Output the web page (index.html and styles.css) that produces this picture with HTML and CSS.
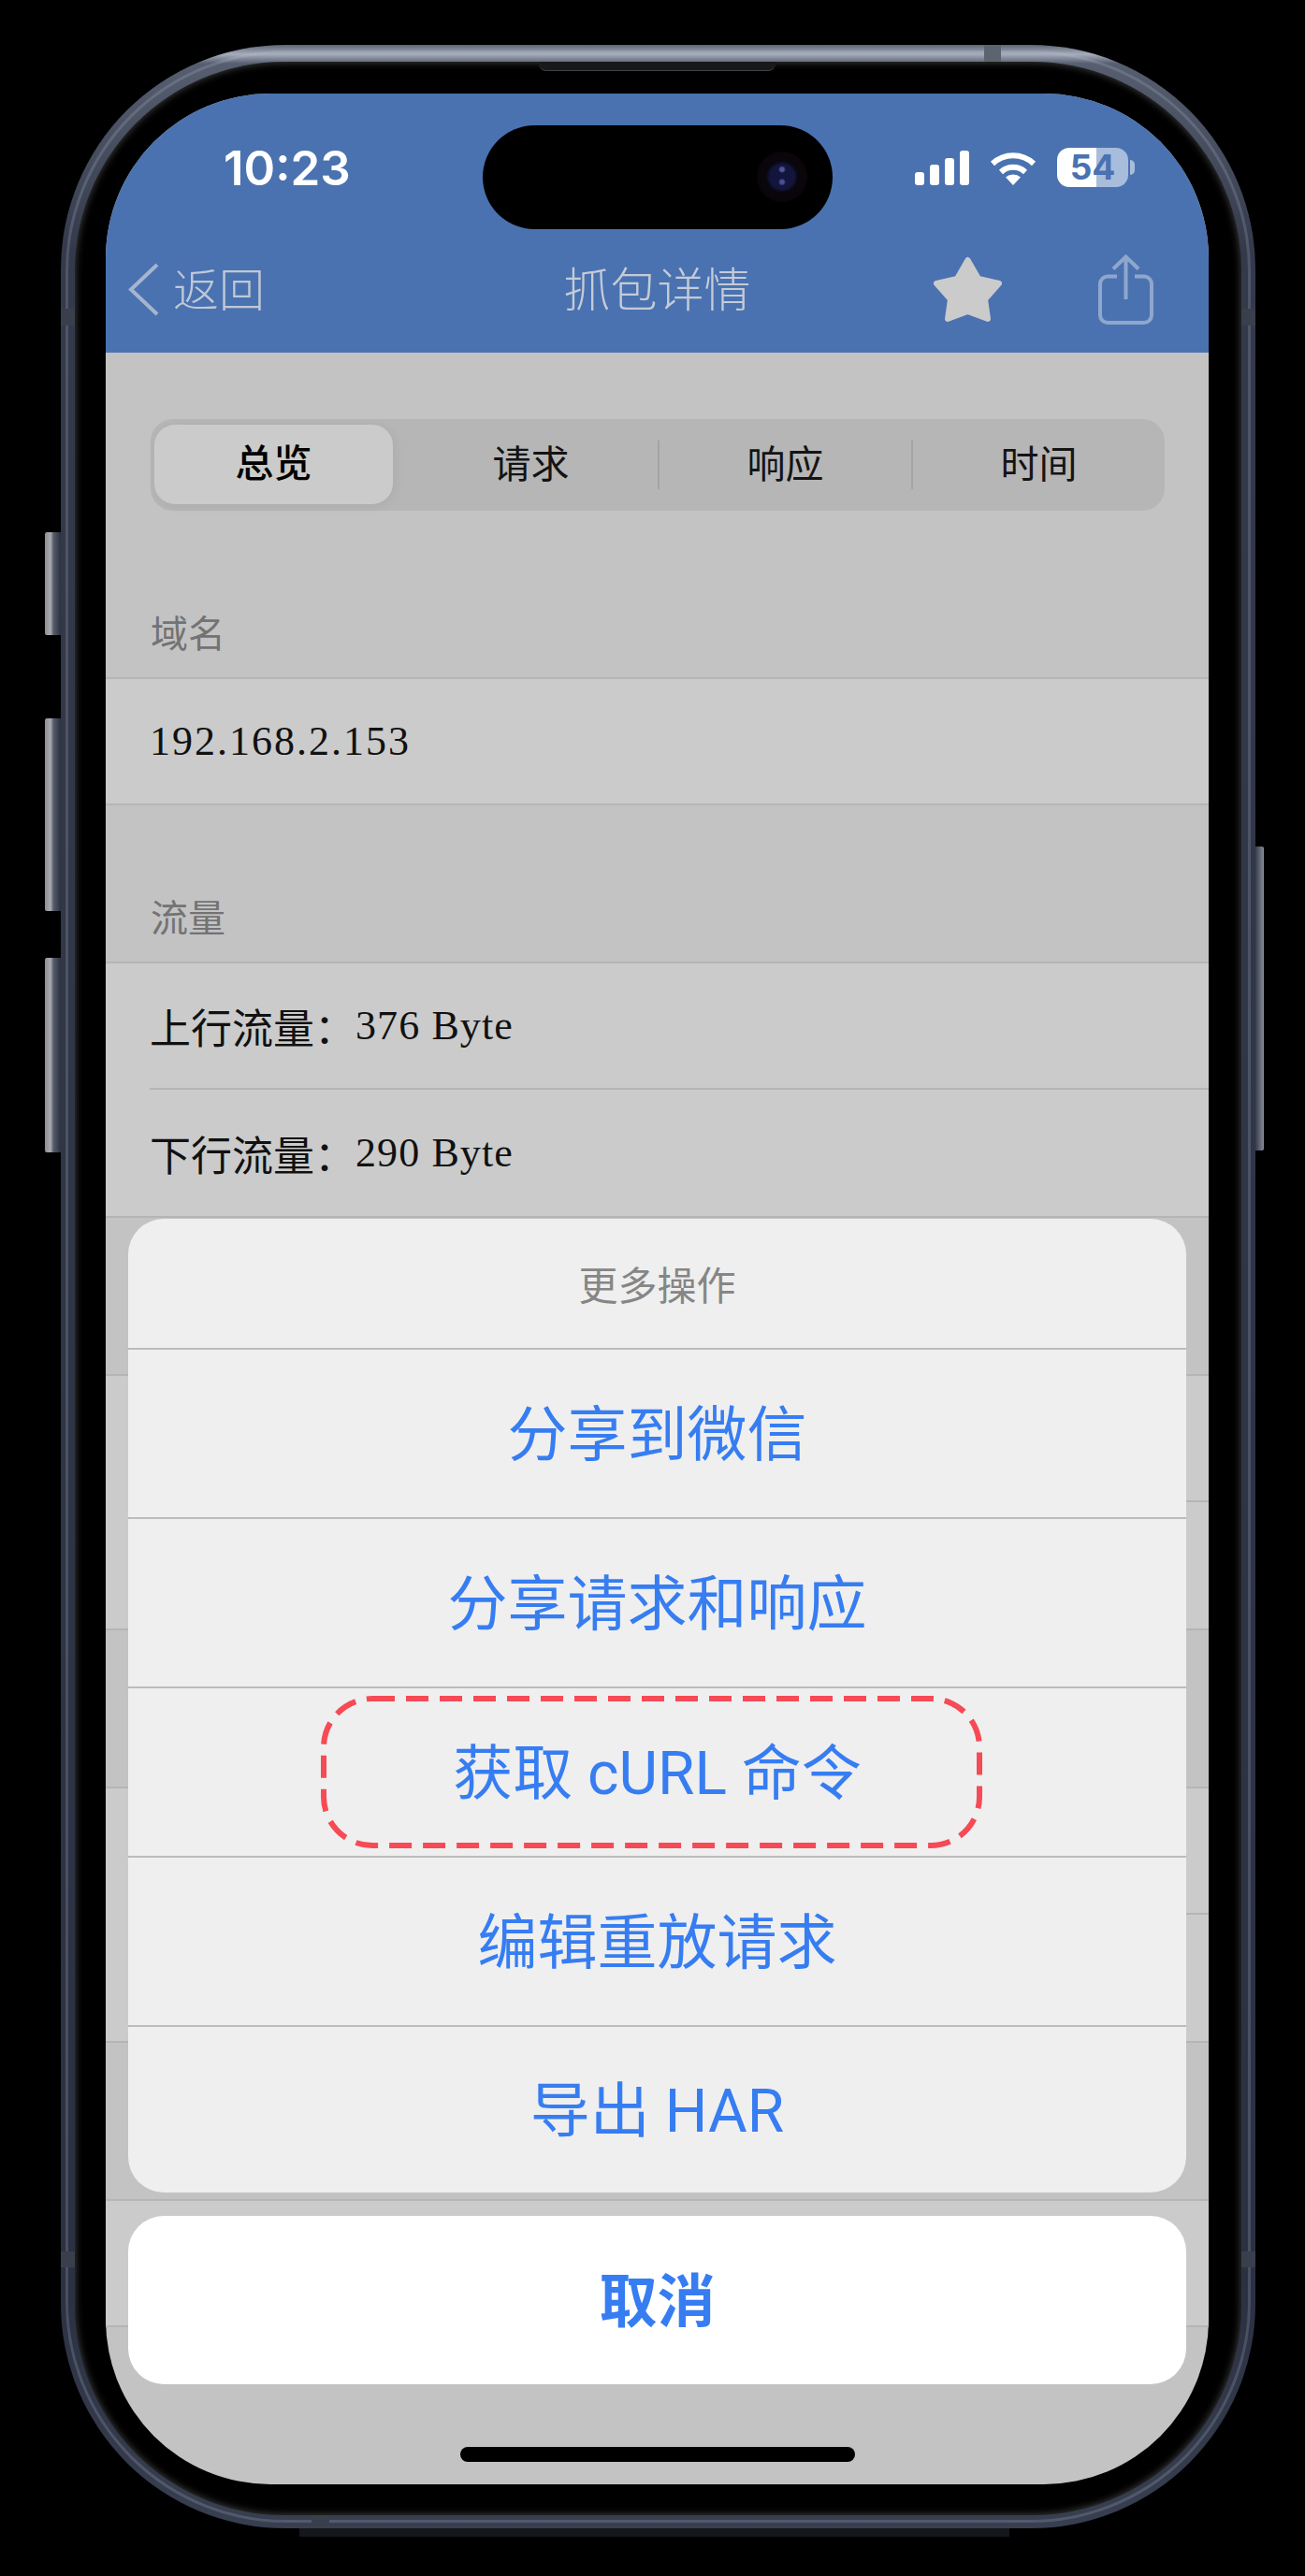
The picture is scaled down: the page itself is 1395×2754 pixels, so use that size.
FILE: index.html
```html
<!DOCTYPE html>
<html lang="zh-CN">
<head>
    <meta charset="UTF-8">
    <meta name="viewport" content="width=device-width, initial-scale=1.0">
    <title>抓包详情</title>
    <link rel="stylesheet" href="styles.css">
</head>
<body>
    <div class="phone">
        <span class="side-btn left mute"></span>
        <span class="side-btn left vol-up"></span>
        <span class="side-btn left vol-down"></span>
        <span class="side-btn right power"></span>
        <span class="antenna top-band"></span>
        <span class="antenna left-band-a"></span>
        <span class="antenna right-band-a"></span>
        <span class="antenna left-band-b"></span>
        <span class="antenna right-band-b"></span>
        <span class="antenna bottom-band"></span>
        <span class="under-shadow"></span>

        <div class="bezel">
            <span class="speaker"></span>
            <div class="screen">
                <div class="island"><span class="camera"></span></div>

                <header class="app-header">
                    <div class="status-bar">
                        <span class="time">10:23</span>
                        <div class="status-icons">
                            <svg class="signal" width="58" height="37" viewBox="0 0 58 37">
                                <rect x="0" y="23" width="10" height="14" rx="3"/>
                                <rect x="16" y="15" width="10" height="22" rx="3"/>
                                <rect x="32" y="8" width="10" height="29" rx="3"/>
                                <rect x="48" y="0" width="10" height="37" rx="3"/>
                            </svg>
                            <svg class="wifi" width="50" height="37" viewBox="0 0 50 37">
                                <path class="wifi-arc" d="M3 14A32 32 0 0 1 47 14"/>
                                <path class="wifi-arc" d="M12 23A19 19 0 0 1 38 23"/>
                                <path class="wifi-dot" d="M25 37L17 28.5A12 12 0 0 1 33 28.5Z"/>
                            </svg>
                            <div class="battery">54</div>
                        </div>
                    </div>
                    <nav class="nav-bar">
                        <div class="nav-back">
                            <svg width="33" height="57" viewBox="0 0 33 57">
                                <path d="M31 2L3 28.5L31 55"/>
                            </svg>
                            <span>返回</span>
                        </div>
                        <div class="nav-title">抓包详情</div>
                        <div class="nav-actions">
                            <svg class="star" width="75" height="71" viewBox="0 0 75 71">
                                <path d="M37.5 4L49 24L71 29L56 46L59 67L37.5 59L16 67L19 46L4 29L26 24Z"/>
                            </svg>
                            <svg class="share" width="59" height="75" viewBox="0 0 59 75">
                                <path d="M20 23.5H10a8 8 0 0 0-8 8V65a8 8 0 0 0 8 8h39a8 8 0 0 0 8-8V31.5a8 8 0 0 0-8-8H39"/>
                                <path d="M29.5 3V48M16 15.5L29.5 2.5L43 15.5"/>
                            </svg>
                        </div>
                    </nav>
                </header>

                <div class="segments">
                    <div class="seg-item active">总览</div>
                    <div class="seg-item">请求</div>
                    <div class="seg-item divided">响应</div>
                    <div class="seg-item divided">时间</div>
                </div>

                <div class="section-head">域名</div>
                <div class="rows">
                    <div class="row"><span class="value ip">192.168.2.153</span></div>
                </div>

                <div class="section-head">流量</div>
                <div class="rows">
                    <div class="row">上行流量：<span class="value">376 Byte</span></div>
                    <div class="row">下行流量：<span class="value">290 Byte</span></div>
                </div>

                <div class="section-head"></div>
                <div class="rows">
                    <div class="row"></div>
                    <div class="row"></div>
                </div>

                <div class="section-head"></div>
                <div class="rows">
                    <div class="row"></div>
                    <div class="row"></div>
                </div>

                <div class="section-head"></div>
                <div class="rows">
                    <div class="row"></div>
                </div>

                <div class="sheet">
                    <div class="sheet-group">
                        <div class="sheet-title">更多操作</div>
                        <div class="sheet-item">分享到微信</div>
                        <div class="sheet-item">分享请求和响应</div>
                        <div class="sheet-item">
                            获取 cURL 命令
                            <svg class="dash-mark" width="707" height="163" viewBox="0 0 707 163">
                                <rect x="3" y="3" width="701" height="157" rx="52"/>
                            </svg>
                        </div>
                        <div class="sheet-item">编辑重放请求</div>
                        <div class="sheet-item last">导出 HAR</div>
                    </div>
                    <div class="sheet-cancel">取消</div>
                </div>

                <span class="home-bar"></span>
            </div>
        </div>
    </div>
</body>
</html>
```

FILE: styles.css
```css
html, body {
    margin: 0;
    height: 2754px;
    overflow: hidden;
    background: #000;
}

body {
    padding: 48px 0 0 65px;
    box-sizing: border-box;
    font-family: Roboto, "Noto Sans CJK SC", sans-serif;
}

.phone {
    position: relative;
    width: 1277px;
    height: 2655px;
    box-sizing: border-box;
    padding: 18px 15px 14px;
    border-radius: 240px;
    background: linear-gradient(180deg, #5d6475 0, #a6adbb 10px, #565e70 20px, #343a4b 220px, #2b3142 2400px, #383f50 100%);
}

.phone::before {
    content: '';
    position: absolute;
    inset: 6px 5px;
    border: 3px solid rgba(190, 198, 220, 0.2);
    border-radius: 236px;
}

.side-btn {
    position: absolute;
    background: linear-gradient(90deg, #8c8e94, #a9abb0 35%, #555a68 55%, #2c3140);
}

.side-btn.left {
    left: -17px;
    width: 17px;
    border-radius: 2px 0 0 2px;
}

.side-btn.right {
    right: -9px;
    width: 9px;
    background: linear-gradient(90deg, #353b4a, #878c97);
    border-radius: 0 2px 2px 0;
}

.mute { top: 521px; height: 110px; }
.vol-up { top: 720px; height: 206px; }
.vol-down { top: 976px; height: 208px; }
.power { top: 857px; height: 325px; }

.antenna {
    position: absolute;
    background: #3a3f4c;
}

.top-band { top: 0; left: 987px; width: 18px; height: 18px; background: #5e6370; }
.left-band-a { top: 282px; left: 0; width: 15px; height: 18px; }
.right-band-a { top: 282px; right: 0; width: 15px; height: 18px; }
.left-band-b { top: 2359px; left: 0; width: 15px; height: 17px; }
.right-band-b { top: 2359px; right: 0; width: 15px; height: 17px; }
.bottom-band { bottom: 0; left: 268px; width: 19px; height: 14px; }

.under-shadow {
    position: absolute;
    left: 255px;
    top: 100%;
    width: 759px;
    height: 9px;
    background: #15171c;
}

.bezel {
    position: relative;
    height: 100%;
    box-sizing: border-box;
    padding: 34px 35px 33px 33px;
    border-radius: 224px;
    background: #000;
    box-shadow: inset 0 0 9px rgba(130, 134, 130, 0.55);
}

.speaker {
    position: absolute;
    top: 0;
    left: 496px;
    width: 253px;
    height: 9px;
    background: #17191b;
    border-bottom: 1px solid #3f4344;
    border-radius: 0 0 8px 8px;
}

.screen {
    position: relative;
    height: 100%;
    overflow: hidden;
    border-radius: 176px;
    background: #c3c3c3;
}

.island {
    position: absolute;
    top: 34px;
    left: 403px;
    width: 374px;
    height: 111px;
    border-radius: 56px;
    background: #000;
}

.camera {
    position: absolute;
    top: 27px;
    right: 26px;
    width: 56px;
    height: 56px;
    border-radius: 50%;
    background:
        radial-gradient(circle at 50% 36%, #53539a 0, #53539a 2px, transparent 4px),
        radial-gradient(circle at 50% 60%, #4a4f9a 0, #4a4f9a 2px, transparent 4px),
        radial-gradient(circle, #14153c 0, #14153c 13px, #08060e 17px, #0b0508 26px, #000 28px);
}

.app-header {
    height: 277px;
    background: #4a72b0;
}

.status-bar {
    height: 158px;
    padding: 0 79px 0 126px;
    display: flex;
    align-items: center;
    justify-content: space-between;
}

.time {
    font-family: Inter, sans-serif;
    font-size: 51px;
    font-weight: 600;
    color: #fff;
}

.status-icons {
    display: flex;
    align-items: center;
    gap: 22px;
}

.signal rect {
    fill: #fff;
}

.wifi-arc {
    fill: none;
    stroke: #fff;
    stroke-width: 6;
}

.wifi-dot {
    fill: #fff;
}

.battery {
    position: relative;
    width: 76px;
    height: 42px;
    margin-right: 7px;
    border-radius: 13px;
    background: linear-gradient(90deg, #fff 55%, #a8bcdc 55%);
    color: #4a72b0;
    font-family: Inter, sans-serif;
    font-size: 37px;
    font-weight: 700;
    line-height: 42px;
    text-align: center;
}

.battery::after {
    content: '';
    position: absolute;
    top: 13px;
    right: -7px;
    width: 5px;
    height: 16px;
    border-radius: 0 5px 5px 0;
    background: #a8bcdc;
}

.nav-bar {
    height: 119px;
    box-sizing: border-box;
    padding: 0 24px 16px;
    display: grid;
    grid-template-columns: 1fr auto 1fr;
    align-items: center;
}

.nav-back {
    display: flex;
    align-items: center;
    gap: 15px;
    color: #c0c8d6;
    font-size: 49px;
    font-weight: 300;
}

.nav-back span, .nav-title {
    margin-bottom: 7px;
}

.nav-back path {
    fill: none;
    stroke: #a5b5d0;
    stroke-width: 4;
}

.nav-title {
    color: #c5cbd6;
    font-size: 50px;
    font-weight: 300;
}

.nav-actions {
    display: flex;
    align-items: center;
    justify-content: flex-end;
    gap: 102px;
    padding-right: 35px;
}

.star path {
    fill: #cbcbcb;
    stroke: #cbcbcb;
    stroke-width: 6;
    stroke-linejoin: round;
}

.share path {
    fill: none;
    stroke: #8fa7cd;
    stroke-width: 4;
}

.segments {
    height: 98px;
    margin: 71px 47px 11px 48px;
    display: grid;
    grid-template-columns: repeat(4, 1fr);
    grid-template-rows: 98px;
    border-radius: 24px;
    background: #b6b6b6;
    color: #141414;
    font-size: 41px;
    line-height: 41px;
}

.seg-item {
    display: flex;
    align-items: center;
    justify-content: center;
}

.seg-item.active {
    margin: 6px 12px 7px 4px;
    border-radius: 22px;
    background: #cbcbcb;
    box-shadow: 2px 2px 12px rgba(0, 0, 0, 0.06);
    font-weight: 500;
    color: #000;
}

.seg-item.divided {
    margin: 23px 0;
    border-left: 2px solid #a4a4a4;
}

.section-head {
    height: 167px;
    box-sizing: border-box;
    padding: 0 48px 25px;
    display: flex;
    align-items: flex-end;
    color: #737373;
    font-size: 40px;
    line-height: 40px;
}

.rows {
    background: #cbcbcb;
    border-top: 2px solid #b5b5b5;
    border-bottom: 2px solid #b5b5b5;
}

.row {
    height: 133px;
    box-sizing: border-box;
    margin-left: 47px;
    display: flex;
    align-items: center;
    color: #111;
    font-size: 44px;
}

.row + .row {
    height: 137px;
    border-top: 2px solid #b5b5b5;
}

.value {
    font-family: "Liberation Serif", serif;
    letter-spacing: 1.1px;
}

.value.ip {
    letter-spacing: 2px;
}

.sheet {
    position: absolute;
    left: 24px;
    right: 24px;
    bottom: 107px;
    display: flex;
    flex-direction: column;
    gap: 25px;
}

.sheet-group {
    overflow: hidden;
    border-radius: 38px;
    background: #efefef;
}

.sheet-title {
    height: 138px;
    box-sizing: border-box;
    padding-bottom: 2px;
    display: flex;
    align-items: center;
    justify-content: center;
    color: #868686;
    font-size: 42px;
}

.sheet-item {
    position: relative;
    height: 181px;
    box-sizing: border-box;
    padding-bottom: 10px;
    border-top: 2px solid #bcbcbc;
    display: flex;
    align-items: center;
    justify-content: center;
    color: #377df2;
    font-size: 64px;
}

.sheet-item.last {
    height: 179px;
}

.dash-mark {
    position: absolute;
    top: 8px;
    left: 206px;
}

.dash-mark rect {
    fill: none;
    stroke: #f64a55;
    stroke-width: 6;
    stroke-dasharray: 24 12;
}

.sheet-cancel {
    height: 180px;
    box-sizing: border-box;
    padding-bottom: 6px;
    display: flex;
    align-items: center;
    justify-content: center;
    border-radius: 38px;
    background: #fff;
    color: #377df2;
    font-size: 62px;
    font-weight: 700;
}

.home-bar {
    position: absolute;
    left: 379px;
    bottom: 24px;
    width: 422px;
    height: 16px;
    border-radius: 8px;
    background: #000;
}
```
